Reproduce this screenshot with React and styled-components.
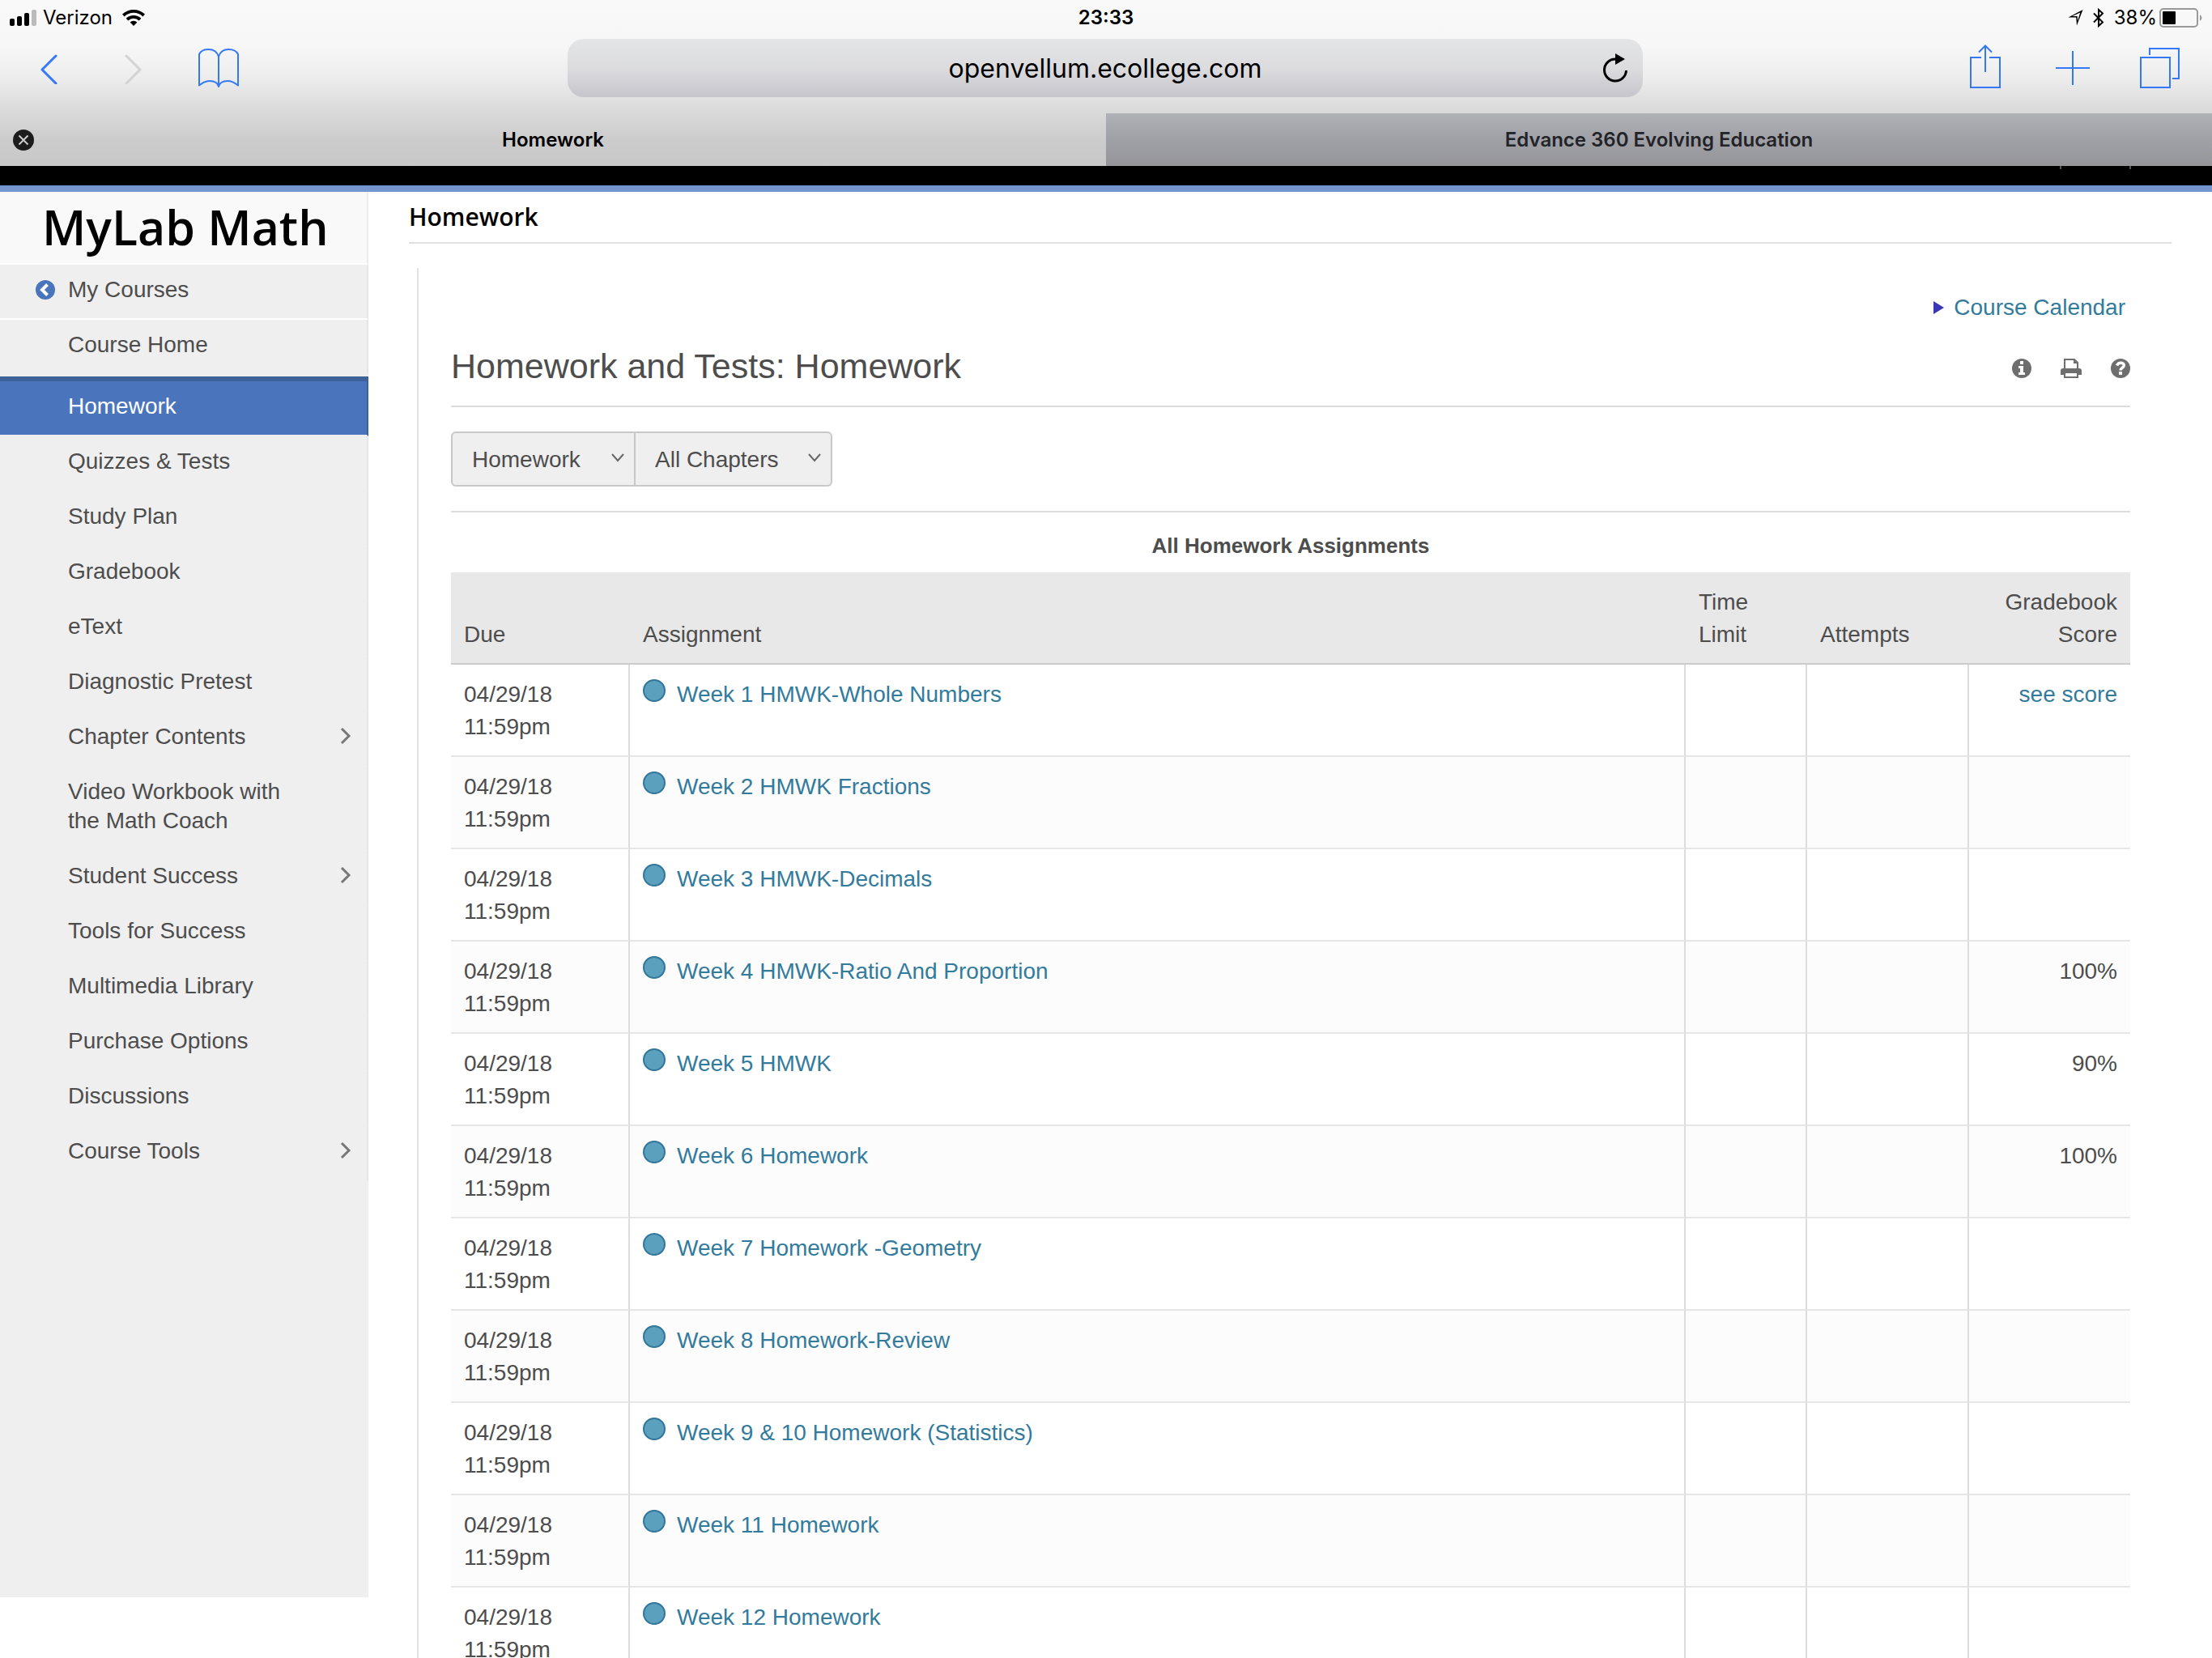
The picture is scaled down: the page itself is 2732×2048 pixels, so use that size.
import React, { useState } from "react";
import styled, { createGlobalStyle } from "styled-components";

const GlobalStyle = createGlobalStyle`
  * {
    box-sizing: border-box;
  }

  html {
    scrollbar-width: none;
  }

  body {
    margin: 0;
    background: #ffffff;
    color: #4d4d4d;
    font-family: "Liberation Sans", Arial, sans-serif;
    font-size: 28px;
    line-height: 40px;
  }

  button,
  input,
  select {
    font-family: inherit;
  }
`;

const navItems = [
  { label: "Quizzes & Tests" },
  { label: "Study Plan" },
  { label: "Gradebook" },
  { label: "eText" },
  { label: "Diagnostic Pretest" },
  { label: "Chapter Contents", expandable: true },
  { label: "Video Workbook with the Math Coach" },
  { label: "Student Success", expandable: true },
  { label: "Tools for Success" },
  { label: "Multimedia Library" },
  { label: "Purchase Options" },
  { label: "Discussions" },
  { label: "Course Tools", expandable: true },
];

const assignments = [
  { title: "Week 1 HMWK-Whole Numbers", link: "see score" },
  { title: "Week 2 HMWK Fractions" },
  { title: "Week 3 HMWK-Decimals" },
  { title: "Week 4 HMWK-Ratio And Proportion", score: "100%" },
  { title: "Week 5 HMWK", score: "90%" },
  { title: "Week 6 Homework", score: "100%" },
  { title: "Week 7 Homework -Geometry" },
  { title: "Week 8 Homework-Review" },
  { title: "Week 9 & 10 Homework (Statistics)" },
  { title: "Week 11 Homework" },
  { title: "Week 12 Homework" },
];

/* browser chrome */

const Chrome = styled.header`
  background: linear-gradient(
    #f9f9f9 0,
    #f7f7f7 56px,
    #ededed 96px,
    #dadada 136px,
    #cbcbcb 176px,
    #c8c8c8 205px
  );
  color: #000000;
  font-family: Inter, sans-serif;
`;

const StatusBar = styled.div`
  display: grid;
  grid-template-columns: 1fr auto 1fr;
  align-items: center;
  height: 40px;
  padding: 2px 12px 0;
  font-size: 24px;
`;

const StatusGroup = styled.div`
  display: flex;
  align-items: center;
  justify-content: ${(props) => (props.$end ? "flex-end" : "flex-start")};
  gap: ${(props) => (props.$end ? "12px" : "8px")};

  svg {
    flex: none;
  }
`;

const Carrier = styled.span`
  margin-right: 4px;
`;

const Battery = styled.span`
  display: flex;
  align-items: center;
  gap: 3px;
`;

const Clock = styled.time`
  font-weight: 600;
`;

const Toolbar = styled.div`
  display: grid;
  grid-template-columns: 1fr minmax(0, 1328px) 1fr;
  align-items: center;
  height: 100px;
  padding: 0 38px 12px 36px;
`;

const ToolGroup = styled.div`
  display: flex;
  align-items: center;
  justify-content: ${(props) => (props.$end ? "flex-end" : "flex-start")};
  gap: 56px;
`;

const ToolButton = styled.button`
  display: flex;
  justify-content: center;
  min-width: ${(props) => (props.$narrow ? "48px" : "52px")};
  padding: 0;
  border: 0;
  background: none;
  color: #3478f6;

  &:disabled {
    color: #d3d3d3;
  }
`;

const AddressBar = styled.div`
  display: flex;
  align-items: center;
  height: 72px;
  padding: 0 8px 0 60px;
  border-radius: 20px;
  background: linear-gradient(#e4e5e7, #dcdcdf 50%, #c6c5cb);
`;

const AddressInput = styled.input`
  flex: 1;
  min-width: 0;
  border: 0;
  background: none;
  color: #000000;
  font-size: 32px;
  text-align: center;
`;

const Tabs = styled.div`
  display: grid;
  grid-template-columns: 1fr 1fr;
  height: 65px;
`;

const Tab = styled.div`
  display: flex;
  align-items: center;
  padding: 0 16px;
  background: ${(props) =>
    props.$active
      ? "none"
      : "linear-gradient(#b0b1b7, #a0a1a6 50%, #949499)"};
`;

const TabLabel = styled.button`
  flex: 1;
  border: 0;
  padding: 0;
  background: none;
  color: ${(props) => (props.$active ? "#000000" : "#222328")};
  font-size: 24px;
  font-weight: 600;
`;

const CloseButton = styled.button`
  display: flex;
  width: 26px;
  margin-right: -26px;
  padding: 0;
  border: 0;
  background: none;
`;

/* page */

const TopBand = styled.div`
  display: flex;
  justify-content: flex-end;
  gap: 84px;
  height: 32px;
  padding-right: 100px;
  border-bottom: 8px solid #7496cf;
  background: #000000;
`;

const BandTick = styled.span`
  width: 2px;
  height: 4px;
  background: #555555;
`;

const Page = styled.div`
  display: flex;
  align-items: flex-start;
`;

const Sidebar = styled.nav`
  flex: none;
  width: 455px;
  min-height: 1736px;
  background: #efefef;
`;

const Brand = styled.div`
  height: 90px;
  padding-left: 52px;
  border-right: 2px solid #ececec;
  border-bottom: 2px solid #ffffff;
  background: #f9f9f9;
  color: #000000;
  font-family: "Open Sans", sans-serif;
  font-size: 59px;
  font-weight: 600;
  line-height: 86px;
  white-space: nowrap;
`;

const NavLink = styled.a`
  display: flex;
  align-items: center;
  padding: 13px 19px 17px ${(props) => (props.$back ? "44px" : "84px")};
  border-right: 2px solid #e6e6e6;
  border-bottom: 2px solid ${(props) => (props.$divided ? "#ffffff" : "#efefef")};
  color: inherit;
  line-height: 36px;
  text-decoration: none;

  &[aria-current] {
    margin-top: 2px;
    border-top: 6px solid #3d6199;
    border-right-color: #3d6199;
    background: #4a75bd;
    color: #ffffff;
  }
`;

const NavText = styled.span`
  max-width: 290px;
  margin-right: auto;
`;

const BackIcon = styled.svg`
  flex: none;
  margin-right: 16px;
`;

const Main = styled.main`
  flex: 1;
  padding: 0 50px;
`;

const PageHeading = styled.h1`
  margin: 0 0 30px;
  padding: 12px 0;
  border-bottom: 2px solid #e0e0e0;
  color: #000000;
  font-family: "Open Sans", sans-serif;
  font-size: 30px;
  font-weight: 600;
  line-height: 38px;
`;

const Content = styled.section`
  margin-left: 10px;
  padding: 29px 51px 0 40px;
  border-left: 2px solid #e4e4e4;
`;

const CalendarRow = styled.div`
  display: flex;
  align-items: center;
  justify-content: flex-end;
  gap: 12px;
  padding-right: 6px;
`;

const TextLink = styled.a`
  color: #337b9d;
  text-decoration: none;
`;

const TitleRow = styled.div`
  display: flex;
  align-items: center;
  justify-content: space-between;
  padding: 24px 0 21px;
  border-bottom: 2px solid #dcdcdc;
`;

const Title = styled.h2`
  margin: 0;
  font-size: 43px;
  font-weight: 400;
  line-height: 56px;
`;

const TitleActions = styled.div`
  display: flex;
  align-items: center;
  gap: 36px;
  padding-top: 6px;
`;

const IconButton = styled.button`
  display: flex;
  padding: 0;
  border: 0;
  background: none;
  color: #6e6e6e;
`;

const Filters = styled.div`
  display: flex;
  padding: 30px 0;
  border-bottom: 2px solid #dcdcdc;
`;

const FilterBox = styled.label`
  display: flex;
  align-items: center;
  width: ${(props) => (props.$wide ? "243px" : "228px")};
  height: 68px;
  padding-right: 12px;
  border: 2px solid #c8c8c8;
  border-left-width: ${(props) => (props.$wide ? "0" : "2px")};
  border-radius: ${(props) => (props.$wide ? "0 6px 6px 0" : "6px 0 0 6px")};
  background: #efefef;

  svg {
    flex: none;
    margin-bottom: 4px;
    pointer-events: none;
  }
`;

const FilterSelect = styled.select`
  flex: 1;
  min-width: 0;
  height: 100%;
  padding: 0 0 0 24px;
  border: 0;
  background: none;
  color: inherit;
  font-size: 28px;
  appearance: none;
`;

const Table = styled.table`
  width: 100%;
  border-collapse: separate;
  border-spacing: 0;
  table-layout: fixed;
`;

const Caption = styled.caption`
  padding: 26px 0 18px;
  font-size: 26px;
  font-weight: 700;
  line-height: 30px;
`;

const Column = styled.col`
  width: ${(props) => props.$width};
`;

const HeadCell = styled.th`
  padding: 17px 16px 15px;
  border-bottom: 2px solid #cccccc;
  background: #e8e8e8;
  font-weight: 400;
  text-align: ${(props) => (props.$end ? "right" : "left")};
  vertical-align: bottom;
`;

const Row = styled.tr`
  &:nth-child(even) {
    background: #fcfcfc;
  }
`;

const Cell = styled.td`
  padding: 17px 16px 15px;
  border-right: 2px solid #dddddd;
  border-bottom: 2px solid #e6e6e6;
  text-align: ${(props) => (props.$end ? "right" : "left")};
  vertical-align: top;

  &:last-child {
    border-right: 0;
  }
`;

const DueText = styled.span`
  display: block;
  width: 120px;
`;

const Dot = styled.span`
  display: inline-block;
  width: 28px;
  height: 28px;
  margin-right: 14px;
  border: 2px solid #31779b;
  border-radius: 50%;
  background: #5ba0bc;
`;

function SignalIcon() {
  return (
    <svg width="33" height="20" viewBox="0 0 33 20">
      <rect x="0" y="11" width="6" height="9" rx="2" />
      <rect x="9" y="8" width="6" height="12" rx="2" />
      <rect x="18" y="4" width="6" height="16" rx="2" />
      <rect x="27" y="0" width="6" height="20" rx="2" fill="#bbbbbb" />
    </svg>
  );
}

function WifiIcon() {
  return (
    <svg width="28" height="20" viewBox="0 0 28 20" fill="none" stroke="#000" strokeWidth="3.8">
      <path d="M1.3 7a18.500 18.500 0 0 1 25.400 0" />
      <path d="M6 12.200a11.500 11.500 0 0 1 16 0" />
      <path d="M14 20l-4.400-4.600a6.400 6.400 0 0 1 8.800 0z" fill="#000" stroke="none" />
    </svg>
  );
}

function ChevronIcon({ direction }) {
  const paths = {
    left: "M19 5L2 22l17 17",
    right: "M2 5l17 17L2 39",
  };
  return (
    <svg width="21" height="40" viewBox="0 0 21 40" fill="none" stroke="currentColor" strokeWidth="3">
      <path d={paths[direction]} strokeLinecap="round" strokeLinejoin="round" />
    </svg>
  );
}

function BookIcon() {
  return (
    <svg width="50" height="48" viewBox="0 0 50 48" fill="none" stroke="currentColor" strokeWidth="2">
      <path
        d="M25 47V10C23 3 18 1 12.500 1S3 3 1 7v38.500C4 43 8 40 14 40s10 3 11 7c1-4 5-7 11-7s10 3 13 5.500V7c-2-4-6-6-11.500-6S27 3 25 10"
        strokeLinejoin="round"
      />
    </svg>
  );
}

function ShareIcon() {
  return (
    <svg width="38" height="58" viewBox="0 0 38 58" fill="none" stroke="currentColor" strokeWidth="2">
      <path d="M14 16H1v37h36V16H24M19 34V2M11 9.500L19 1.500l8 8" />
    </svg>
  );
}

function PlusIcon() {
  return (
    <svg width="42" height="42" viewBox="0 0 42 42" fill="none" stroke="currentColor" strokeWidth="2">
      <path d="M21 0v42M0 21h42" />
    </svg>
  );
}

function TabsIcon() {
  return (
    <svg width="50" height="50" viewBox="0 0 50 50" fill="none" stroke="currentColor" strokeWidth="2">
      <path d="M1 12h36v37H1zM12 9V1h36v37h-8" />
    </svg>
  );
}

function ReloadIcon() {
  return (
    <svg width="32" height="36" viewBox="0 0 32 36" fill="none" stroke="#000" strokeWidth="3">
      <path d="M29.500 21a13.500 13.500 0 1 1-13.500-14h1" />
      <path d="M16 0l12 7-12 7z" fill="#000" stroke="none" />
    </svg>
  );
}

function Triangle() {
  return (
    <svg width="13" height="16" viewBox="0 0 13 16">
      <path d="M0 0l13 8-13 8z" fill="#3a36b4" />
    </svg>
  );
}

function SelectArrow() {
  return (
    <svg width="16" height="12" viewBox="0 0 16 12" fill="none" stroke="#666" strokeWidth="2">
      <path d="M1 2l7 8 7-8" />
    </svg>
  );
}

function AssignmentRow({ title, link, score }) {
  return (
    <Row>
      <Cell>
        <DueText>04/29/18 11:59pm</DueText>
      </Cell>
      <Cell>
        <Dot />
        <TextLink href="#assignment">{title}</TextLink>
      </Cell>
      <Cell />
      <Cell />
      <Cell $end>{link ? <TextLink href="#score">{link}</TextLink> : score}</Cell>
    </Row>
  );
}

export default function App() {
  const [url, setUrl] = useState("openvellum.ecollege.com");

  return (
    <>
      <GlobalStyle />
      <Chrome>
        <StatusBar>
          <StatusGroup>
            <SignalIcon />
            <Carrier>Verizon</Carrier>
            <WifiIcon />
          </StatusGroup>
          <Clock>23:33</Clock>
          <StatusGroup $end>
            <svg width="19" height="22" viewBox="0 0 19 22">
              <path
                d="M18.500 1L.5 10.500h9.700L11 20.500zM15.200 4.600l-3.100 10-.5-5.600-6-.1z"
                fillRule="evenodd"
              />
            </svg>
            <svg width="14" height="24" viewBox="0 0 14 24" fill="none" stroke="#000" strokeWidth="2">
              <path d="M1 6.500l11 11L7 22V2l5 4.500-11 11" />
            </svg>
            <Battery>
              <span>38%</span>
              <svg width="53" height="24" viewBox="0 0 53 24">
                <rect x="1" y="1" width="46" height="22" rx="4" fill="none" stroke="#999" strokeWidth="2" />
                <rect x="4" y="4" width="16" height="16" rx="1" />
                <path d="M50 8q5 4 0 8z" fill="#999" />
              </svg>
            </Battery>
          </StatusGroup>
        </StatusBar>
        <Toolbar>
          <ToolGroup>
            <ToolButton $narrow aria-label="Back">
              <ChevronIcon direction="left" />
            </ToolButton>
            <ToolButton $narrow disabled aria-label="Forward">
              <ChevronIcon direction="right" />
            </ToolButton>
            <ToolButton aria-label="Bookmarks">
              <BookIcon />
            </ToolButton>
          </ToolGroup>
          <AddressBar>
            <AddressInput
              aria-label="Address"
              value={url}
              onChange={(e) => setUrl(e.target.value)}
            />
            <ToolButton aria-label="Reload">
              <ReloadIcon />
            </ToolButton>
          </AddressBar>
          <ToolGroup $end>
            <ToolButton aria-label="Share">
              <ShareIcon />
            </ToolButton>
            <ToolButton aria-label="New tab">
              <PlusIcon />
            </ToolButton>
            <ToolButton aria-label="Show tabs">
              <TabsIcon />
            </ToolButton>
          </ToolGroup>
        </Toolbar>
        <Tabs>
          <Tab $active>
            <CloseButton aria-label="Close tab">
              <svg width="26" height="26" viewBox="0 0 26 26" stroke="#ccc" strokeWidth="2">
                <circle cx="13" cy="13" r="13" fill="#1c1c1c" stroke="none" />
                <path d="M7.500 7.500l11 11M18.500 7.500l-11 11" />
              </svg>
            </CloseButton>
            <TabLabel $active>Homework</TabLabel>
          </Tab>
          <Tab>
            <TabLabel>Edvance 360 Evolving Education</TabLabel>
          </Tab>
        </Tabs>
      </Chrome>
      <TopBand>
        <BandTick />
        <BandTick />
      </TopBand>
      <Page>
        <Sidebar>
          <Brand>MyLab Math</Brand>
          <NavLink href="#courses" $back $divided>
            <BackIcon width="24" height="24" viewBox="0 0 24 24">
              <circle cx="12" cy="12" r="12" fill="#4a75bd" />
              <path d="M14.500 5.500L8 12l6.500 6.500" fill="none" stroke="#fff" strokeWidth="4" />
            </BackIcon>
            <NavText>My Courses</NavText>
          </NavLink>
          <NavLink href="#home">
            <NavText>Course Home</NavText>
          </NavLink>
          <NavLink href="#homework" aria-current="page">
            <NavText>Homework</NavText>
          </NavLink>
          {navItems.map((item) => (
            <NavLink href="#section" key={item.label}>
              <NavText>{item.label}</NavText>
              {item.expandable && (
                <svg width="14" height="22" viewBox="0 0 14 22" fill="none" stroke="#777" strokeWidth="3">
                  <path d="M2 1l9 9-9 9" />
                </svg>
              )}
            </NavLink>
          ))}
        </Sidebar>
        <Main>
          <PageHeading>Homework</PageHeading>
          <Content>
            <CalendarRow>
              <Triangle />
              <TextLink href="#calendar">Course Calendar</TextLink>
            </CalendarRow>
            <TitleRow>
              <Title>Homework and Tests: Homework</Title>
              <TitleActions>
                <IconButton aria-label="Information">
                  <svg width="24" height="24" viewBox="0 0 24 24" fill="currentColor">
                    <circle cx="12" cy="12" r="12" />
                    <path d="M10 3h4v4h-4zM8 9h6v8h2v3H8v-3h2v-5H8z" fill="#fff" />
                  </svg>
                </IconButton>
                <IconButton aria-label="Print">
                  <svg width="26" height="24" viewBox="0 0 26 24" fill="currentColor">
                    <path d="M5 12V1h12l4 4v7" fill="none" stroke="currentColor" strokeWidth="2" />
                    <path d="M16 1v5h5z" />
                    <path d="M3 12h20a3 3 0 0 1 3 3v5h-4v-3H4v3H0v-5a3 3 0 0 1 3-3z" />
                    <path d="M5 17h16v6H5z" fill="#fff" stroke="currentColor" strokeWidth="2" />
                  </svg>
                </IconButton>
                <IconButton aria-label="Help">
                  <svg width="24" height="24" viewBox="0 0 24 24" fill="currentColor">
                    <circle cx="12" cy="12" r="12" />
                    <path
                      d="M7.500 8.500c2-4.500 9-4 8.800 0-.2 2.800-4.300 2.700-4.300 6"
                      fill="none"
                      stroke="#fff"
                      strokeWidth="3.5"
                    />
                    <path d="M10 16h4v4h-4z" fill="#fff" />
                  </svg>
                </IconButton>
              </TitleActions>
            </TitleRow>
            <Filters>
              <FilterBox>
                <FilterSelect aria-label="Assignment type">
                  <option>Homework</option>
                </FilterSelect>
                <SelectArrow />
              </FilterBox>
              <FilterBox $wide>
                <FilterSelect aria-label="Chapter">
                  <option>All Chapters</option>
                </FilterSelect>
                <SelectArrow />
              </FilterBox>
            </Filters>
            <Table>
              <Caption>All Homework Assignments</Caption>
              <colgroup>
                <Column $width="221px" />
                <Column />
                <Column $width="150px" />
                <Column $width="200px" />
                <Column $width="199px" />
              </colgroup>
              <thead>
                <tr>
                  <HeadCell>Due</HeadCell>
                  <HeadCell>Assignment</HeadCell>
                  <HeadCell>
                    Time
                    <br />
                    Limit
                  </HeadCell>
                  <HeadCell>Attempts</HeadCell>
                  <HeadCell $end>
                    Gradebook
                    <br />
                    Score
                  </HeadCell>
                </tr>
              </thead>
              <tbody>
                {assignments.map((item) => (
                  <AssignmentRow key={item.title} {...item} />
                ))}
              </tbody>
            </Table>
          </Content>
        </Main>
      </Page>
    </>
  );
}
